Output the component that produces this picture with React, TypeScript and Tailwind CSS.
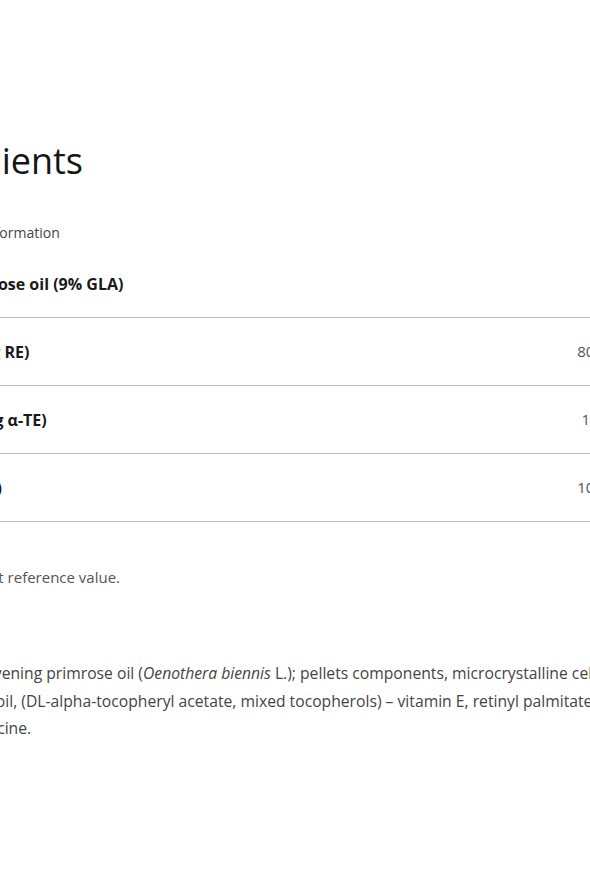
const rows = [
  { name: "Vitamin A (µg RE)", value: "800" },
  { name: "Vitamin E (mg α-TE)", value: "12" },
  { name: "Selenium (µg)", value: "100" },
];

export default function App() {
  return (
    <div className="min-h-screen w-full overflow-hidden bg-white font-['Open_Sans',sans-serif]">
      <div className="ml-[-100px] w-[800px] pt-[141px]">
        {/* Section title */}
        <h2 className="ml-[-7px] text-[36px] font-medium leading-[40px] text-[#151515]">Ingredients</h2>
        <p className="ml-[20px] mt-10 text-[14px] leading-6 text-[#444]">Nutrition information</p>

        {/* Nutrition table */}
        <div className="mt-[5px]">
          <div className="flex h-[68px] items-center border-b border-[#bcbcbc] text-[16px] font-bold text-[#1a1a1a]">
            <span className="ml-[-14px]">Evening primrose oil (9% GLA)</span>
          </div>
          {rows.map((r) => (
            <div
              key={r.name}
              className="grid h-[68px] grid-cols-[640px_100px_1fr] items-center border-b border-[#bcbcbc]"
            >
              <span className="ml-[-7px] text-[16px] font-bold text-[#1a1a1a]">{r.name}</span>
              <span className="text-center text-[15px] text-[#555]">{r.value}</span>
              <span />
            </div>
          ))}
        </div>

        <p className="ml-[-6px] mt-[43px] text-[15px] leading-6 text-[#555]">*NRV – nutrient reference value.</p>

        {/* Composition */}
        <div className="mt-[71px] text-[15.7px] leading-[27.5px] text-[#444]">
          <p className="ml-[-6px]">
            Ingredients: evening primrose oil (<i>Oenothera biennis</i> L.); pellets components, microcrystalline cellulose,
          </p>
          <p className="ml-[19px]">
            sunflower oil, (DL-alpha-tocopheryl acetate, mixed tocopherols) – vitamin E, retinyl palmitate – vitamin A,
          </p>
          <p className="ml-[-11px]">humectant: glycine.</p>
        </div>
      </div>
    </div>
  );
}
